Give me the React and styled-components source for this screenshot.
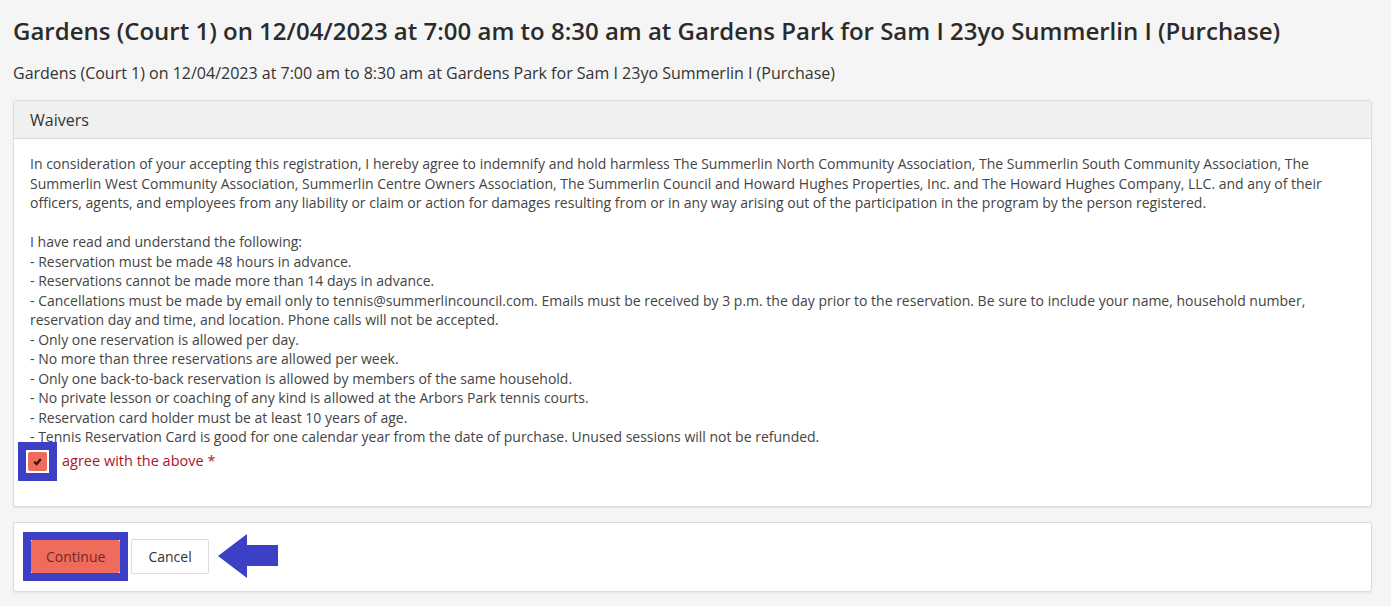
import React, { useState } from "react"
import styled, { createGlobalStyle } from "styled-components"

const colors = {
  page: "#f5f5f5",
  text: "#333",
  body: "#444",
  border: "#dcdcdc",
  header: "#f0f0f0",
  accent: "#ef6b5b",
  mark: "#3c40c4",
  required: "#b01229"
}

const GlobalStyle = createGlobalStyle`
  html, body {
    margin: 0;
    background: ${colors.page};
    font-family: "Open Sans", "Liberation Sans", sans-serif;
    color: ${colors.text};
  }
`

const Page = styled.div`
  padding: 0 19px 14px 13px;
`

const Title = styled.h1`
  margin: 0;
  padding-top: 14px;
  font-size: 24px;
  line-height: 34px;
  font-weight: 600;
  color: #2b2b2b;
`

const Subtitle = styled.p`
  margin: 0;
  padding-top: 14px;
  font-size: 16px;
  line-height: 22px;
  color: #333;
`

const Panel = styled.section`
  background: #fff;
  border: 1px solid ${colors.border};
  border-radius: 3px;
  box-shadow: 0 1px 2px rgba(0, 0, 0, 0.08);
  margin-top: ${(p) => p.$top}px;
`

const PanelHeader = styled.div`
  background: ${colors.header};
  border-bottom: 1px solid ${colors.border};
  height: 37px;
  display: flex;
  align-items: center;
  padding: 0 16px;
  font-size: 16px;
  color: #333;
`

const PanelBody = styled.div`
  padding: 15px 16px 25px 16px;
  font-size: 14px;
  line-height: 19.5px;
  color: ${colors.body};
`

const Para = styled.p`
  margin: 0 0 19.5px 0;
`

const Lines = styled.div`
  display: flex;
  flex-direction: column;
`

const CheckRow = styled.label`
  display: flex;
  align-items: center;
  gap: 5px;
  margin-left: -12px;
  margin-top: -5px;
  cursor: pointer;
`

const Marked = styled.div`
  border: 8px solid ${colors.mark};
  background: #fff;
  display: flex;
  align-items: center;
  justify-content: center;
  padding: ${(p) => p.$pad || "0"};
`

const Box = styled.span`
  width: 19px;
  height: 19px;
  background: ${colors.accent};
  border-radius: 2px;
  display: flex;
  align-items: center;
  justify-content: center;
`

const AgreeText = styled.span`
  color: ${colors.required};
  font-size: 14.5px;
`

const Actions = styled.div`
  padding: 9px 9px 10px 9px;
  display: flex;
  align-items: center;
  gap: 3px;
`

const Button = styled.button`
  font-family: inherit;
  font-size: 14px;
  height: ${(p) => (p.$primary ? 33 : 35)}px;
  padding: 0 ${(p) => (p.$primary ? 14 : 16)}px;
  border-radius: 2px;
  border: 1px solid ${(p) => (p.$primary ? colors.accent : "#ddd")};
  background: ${(p) => (p.$primary ? colors.accent : "#fff")};
  color: ${(p) => (p.$primary ? "#7a2620" : "#333")};
  cursor: pointer;
`

const Arrow = styled.svg`
  margin-left: 6px;
  display: block;
`

const rules = [
  "- Reservation must be made 48 hours in advance.",
  "- Reservations cannot be made more than 14 days in advance.",
  "- Cancellations must be made by email only to tennis@summerlincouncil.com. Emails must be received by 3 p.m. the day prior to the reservation. Be sure to include your name, household number, reservation day and time, and location. Phone calls will not be accepted.",
  "- Only one reservation is allowed per day.",
  "- No more than three reservations are allowed per week.",
  "- Only one back-to-back reservation is allowed by members of the same household.",
  "- No private lesson or coaching of any kind is allowed at the Arbors Park tennis courts.",
  "- Reservation card holder must be at least 10 years of age.",
  "- Tennis Reservation Card is good for one calendar year from the date of purchase. Unused sessions will not be refunded."
]

const heading =
  "Gardens (Court 1) on 12/04/2023 at 7:00 am to 8:30 am at Gardens Park for Sam I 23yo Summerlin I (Purchase)"

export default function App() {
  const [agreed, setAgreed] = useState(true)

  return (
    <Page>
      <GlobalStyle />
      <Title>{heading}</Title>
      <Subtitle>{heading}</Subtitle>

      <Panel $top={16}>
        <PanelHeader>Waivers</PanelHeader>
        <PanelBody>
          <Para>
            In consideration of your accepting this registration, I hereby agree to indemnify and hold
            harmless The Summerlin North Community Association, The Summerlin South Community
            Association, The Summerlin West Community Association, Summerlin Centre Owners Association,
            The Summerlin Council and Howard Hughes Properties, Inc. and The Howard Hughes Company, LLC.
            and any of their officers, agents, and employees from any liability or claim or action for
            damages resulting from or in any way arising out of the participation in the program by the
            person registered.
          </Para>
          <Lines>
            <span>I have read and understand the following:</span>
            {rules.map((r, i) => (
              <span key={i}>{r}</span>
            ))}
          </Lines>
          <CheckRow onClick={() => setAgreed(!agreed)}>
            <Marked $pad="2px">
              <Box>
                {agreed && (
                  <svg width="11" height="11" viewBox="0 0 10 10">
                    <path d="M2 5.2 L4.2 7.3 L8 2.8" fill="none" stroke="#3a100c" strokeWidth="2" />
                  </svg>
                )}
              </Box>
            </Marked>
            <AgreeText>agree with the above *</AgreeText>
          </CheckRow>
        </PanelBody>
      </Panel>

      <Panel $top={15}>
        <Actions>
          <Marked>
            <Button $primary>Continue</Button>
          </Marked>
          <Button>Cancel</Button>
          <Arrow width="60" height="44" viewBox="0 0 60 44">
            <path d="M0 22 L29 0 L29 11 L60 11 L60 32 L29 32 L29 44 Z" fill={colors.mark} />
          </Arrow>
        </Actions>
      </Panel>
    </Page>
  )
}
